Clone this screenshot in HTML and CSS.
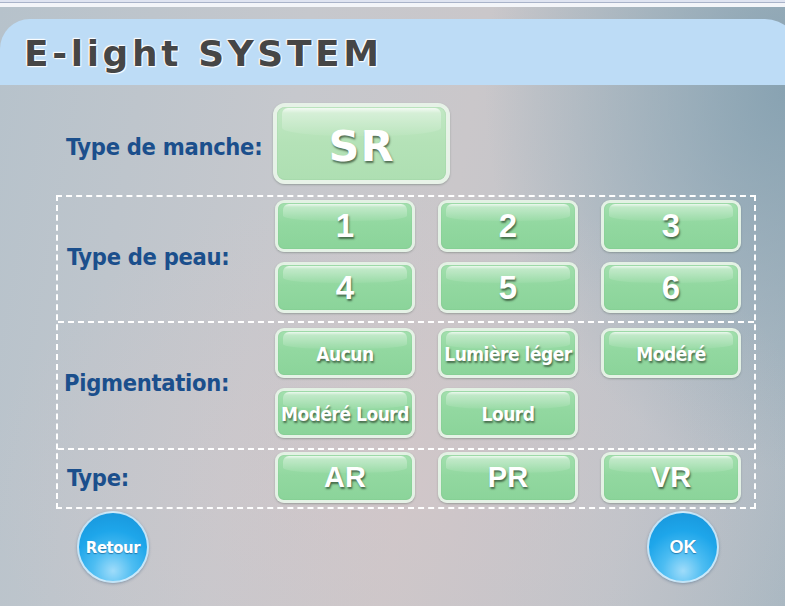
FILE: index.html
```html
<!DOCTYPE html>
<html>
<head>
<meta charset="utf-8">
<link rel="stylesheet" href="styles.css">
</head>
<body>
<div class="topbar"></div>
<div class="header"><h1 class="title">E-light SYSTEM</h1></div>
<div class="handle-row">
  <div class="label label-handle">Type de manche:</div>
  <div class="btn btn-sr"><span>SR</span></div>
</div>
<div class="box">
  <div class="section sec-peau">
    <div class="label">Type de peau:</div>
    <div class="grid grid-peau">
      <div class="btn num"><span>1</span></div>
      <div class="btn num"><span>2</span></div>
      <div class="btn num"><span>3</span></div>
      <div class="btn num"><span>4</span></div>
      <div class="btn num"><span>5</span></div>
      <div class="btn num"><span>6</span></div>
    </div>
  </div>
  <div class="section sec-pig">
    <div class="label">Pigmentation:</div>
    <div class="grid grid-pig">
      <div class="btn word"><span>Aucun</span></div>
      <div class="btn word"><span>Lumière léger</span></div>
      <div class="btn word"><span>Modéré</span></div>
      <div class="btn word"><span>Modéré Lourd</span></div>
      <div class="btn word"><span>Lourd</span></div>
    </div>
  </div>
  <div class="section sec-type">
    <div class="label">Type:</div>
    <div class="grid grid-type">
      <div class="btn code"><span>AR</span></div>
      <div class="btn code"><span>PR</span></div>
      <div class="btn code"><span>VR</span></div>
    </div>
  </div>
</div>
<div class="nav">
  <div class="round round-back"><span>Retour</span></div>
  <div class="round round-ok"><span>OK</span></div>
</div>
</body>
</html>
```

FILE: styles.css
```css
html, body {
  margin: 0;
  padding: 0;
}
body {
  width: 785px;
  height: 606px;
  overflow: hidden;
  font-family: "DejaVu Sans", sans-serif;
  background:
    radial-gradient(ellipse 420px 300px at 52% 80%, rgba(214, 198, 200, 0.55), rgba(214, 198, 200, 0) 100%),
    radial-gradient(ellipse 300px 380px at 100% 15%, rgba(132, 160, 176, 0.9), rgba(132, 160, 176, 0) 100%),
    linear-gradient(100deg, #b6c2cb 0%, #c6c8cd 35%, #cac7ca 55%, #bcc3ca 80%, #aab8c2 100%);
}
.topbar {
  height: 7px;
  background: linear-gradient(#dfe4f1 0, #dfe4f1 2px, #a9b3c9 2px, #a9b3c9 3px, #f3f5f9 3px, #f3f5f9 7px);
}
.header {
  margin-top: 12px;
  width: 800px;
  height: 66px;
  background: #bddcf6;
  border-radius: 30px 35px 0 0;
  display: flex;
  align-items: center;
}
.title {
  margin: 4px 0 0 24px;
  font-family: "DejaVu Sans", sans-serif;
  font-weight: bold;
  font-size: 36px;
  letter-spacing: 3.6px;
  color: #464646;
  text-shadow: 0 0 1px #fff, 0 0 2px #fff, 0 0 2px #fff, 1px 1px 1px #fff, -1px -1px 1px #fff;
  line-height: 66px;
}
.label {
  font-family: "DejaVu Sans Condensed", "DejaVu Sans", sans-serif;
  font-weight: bold;
  font-size: 23.5px;
  color: #1b4f8c;
  letter-spacing: -0.3px;
}
.handle-row {
  margin-top: 18px;
  display: flex;
  align-items: center;
  padding-left: 66px;
}
.label-handle {
  width: 207px;
  padding-top: 6px;
}
.btn {
  position: relative;
  box-sizing: border-box;
  border-radius: 9px;
  border: 3px solid rgba(236, 244, 236, 0.9);
  background: linear-gradient(#a3dfae 0%, #92d8a0 45%, #8bd49a 100%);
  box-shadow: 0 1px 2px rgba(60, 80, 70, 0.35), inset 0 0 1px rgba(80, 150, 90, 0.6);
  color: #fff;
  display: flex;
  align-items: center;
  justify-content: center;
  overflow: hidden;
}
.btn::before {
  content: "";
  position: absolute;
  left: 5px;
  right: 5px;
  top: 1px;
  height: 38%;
  border-radius: 6px 6px 40% 40% / 6px 6px 30% 30%;
  background: linear-gradient(rgba(255, 255, 255, 0.8) 0, rgba(255, 255, 255, 0.35) 18%, rgba(255, 255, 255, 0.05) 100%);
}
.btn span {
  position: relative;
  text-shadow: 1px 2px 2px rgba(30, 50, 30, 0.65);
}
.btn-sr {
  width: 177px;
  height: 81px;
  border-radius: 12px;
  border-width: 4px;
  background: linear-gradient(#c2e8c4 0%, #b4e2b7 50%, #aedfb2 100%);
  font-family: "DejaVu Sans", sans-serif;
  font-weight: bold;
  font-size: 43px;
  letter-spacing: 1px;
}
.btn-sr span {
  padding-top: 4px;
}
.box {
  margin: 11px 0 0 56px;
  width: 700px;
  box-sizing: border-box;
  border: 2px dashed #ffffff;
}
.section {
  display: flex;
  align-items: center;
}
.section .label {
  width: 208px;
  padding-left: 9px;
  flex: none;
}
.sec-peau {
  padding: 3px 0 8px;
  border-bottom: 2px dashed #ffffff;
}
.sec-pig {
  padding: 5px 0 10px;
  border-bottom: 2px dashed #ffffff;
}
.sec-pig .label {
  padding-left: 6px;
  width: 211px;
}
.sec-type {
  padding: 2px 0 4px;
}
.grid {
  display: grid;
  grid-template-columns: 140px 140px 140px;
  column-gap: 23px;
}
.grid-peau {
  grid-template-rows: 52px 51px;
  row-gap: 10px;
}
.grid-pig {
  grid-template-rows: 50px 50px;
  row-gap: 10px;
}
.grid-type {
  grid-template-rows: 51px;
}
.num {
  font-family: "Liberation Sans", Arial, sans-serif;
  font-weight: bold;
  font-size: 33px;
}
.code {
  font-family: "Liberation Sans", Arial, sans-serif;
  font-weight: bold;
  font-size: 29px;
}
.word {
  font-family: "DejaVu Sans Condensed", "DejaVu Sans", sans-serif;
  font-weight: bold;
  font-size: 19px;
  letter-spacing: -0.5px;
  white-space: nowrap;
}
.word span {
  padding-top: 2px;
}
.nav {
  margin-top: 2px;
  padding-left: 77px;
  width: 642px;
  display: flex;
  justify-content: space-between;
}
.round {
  width: 72px;
  height: 72px;
  box-sizing: border-box;
  border-radius: 50%;
  border: 2px solid rgba(225, 240, 250, 0.85);
  background: radial-gradient(circle at 50% 85%, #9fdcfa 0%, #4dbdf2 30%, #1ea6ea 60%, #1692d8 100%);
  box-shadow: 0 1px 3px rgba(20, 60, 100, 0.35);
  color: #fff;
  display: flex;
  align-items: center;
  justify-content: center;
  text-shadow: 0 1px 1px rgba(0, 60, 110, 0.5);
}
.round-back {
  font-family: "DejaVu Sans Condensed", "DejaVu Sans", sans-serif;
  font-weight: bold;
  font-size: 16.5px;
  letter-spacing: -0.4px;
}
.round-ok {
  font-family: "Liberation Sans", Arial, sans-serif;
  font-weight: bold;
  font-size: 18px;
}
```
